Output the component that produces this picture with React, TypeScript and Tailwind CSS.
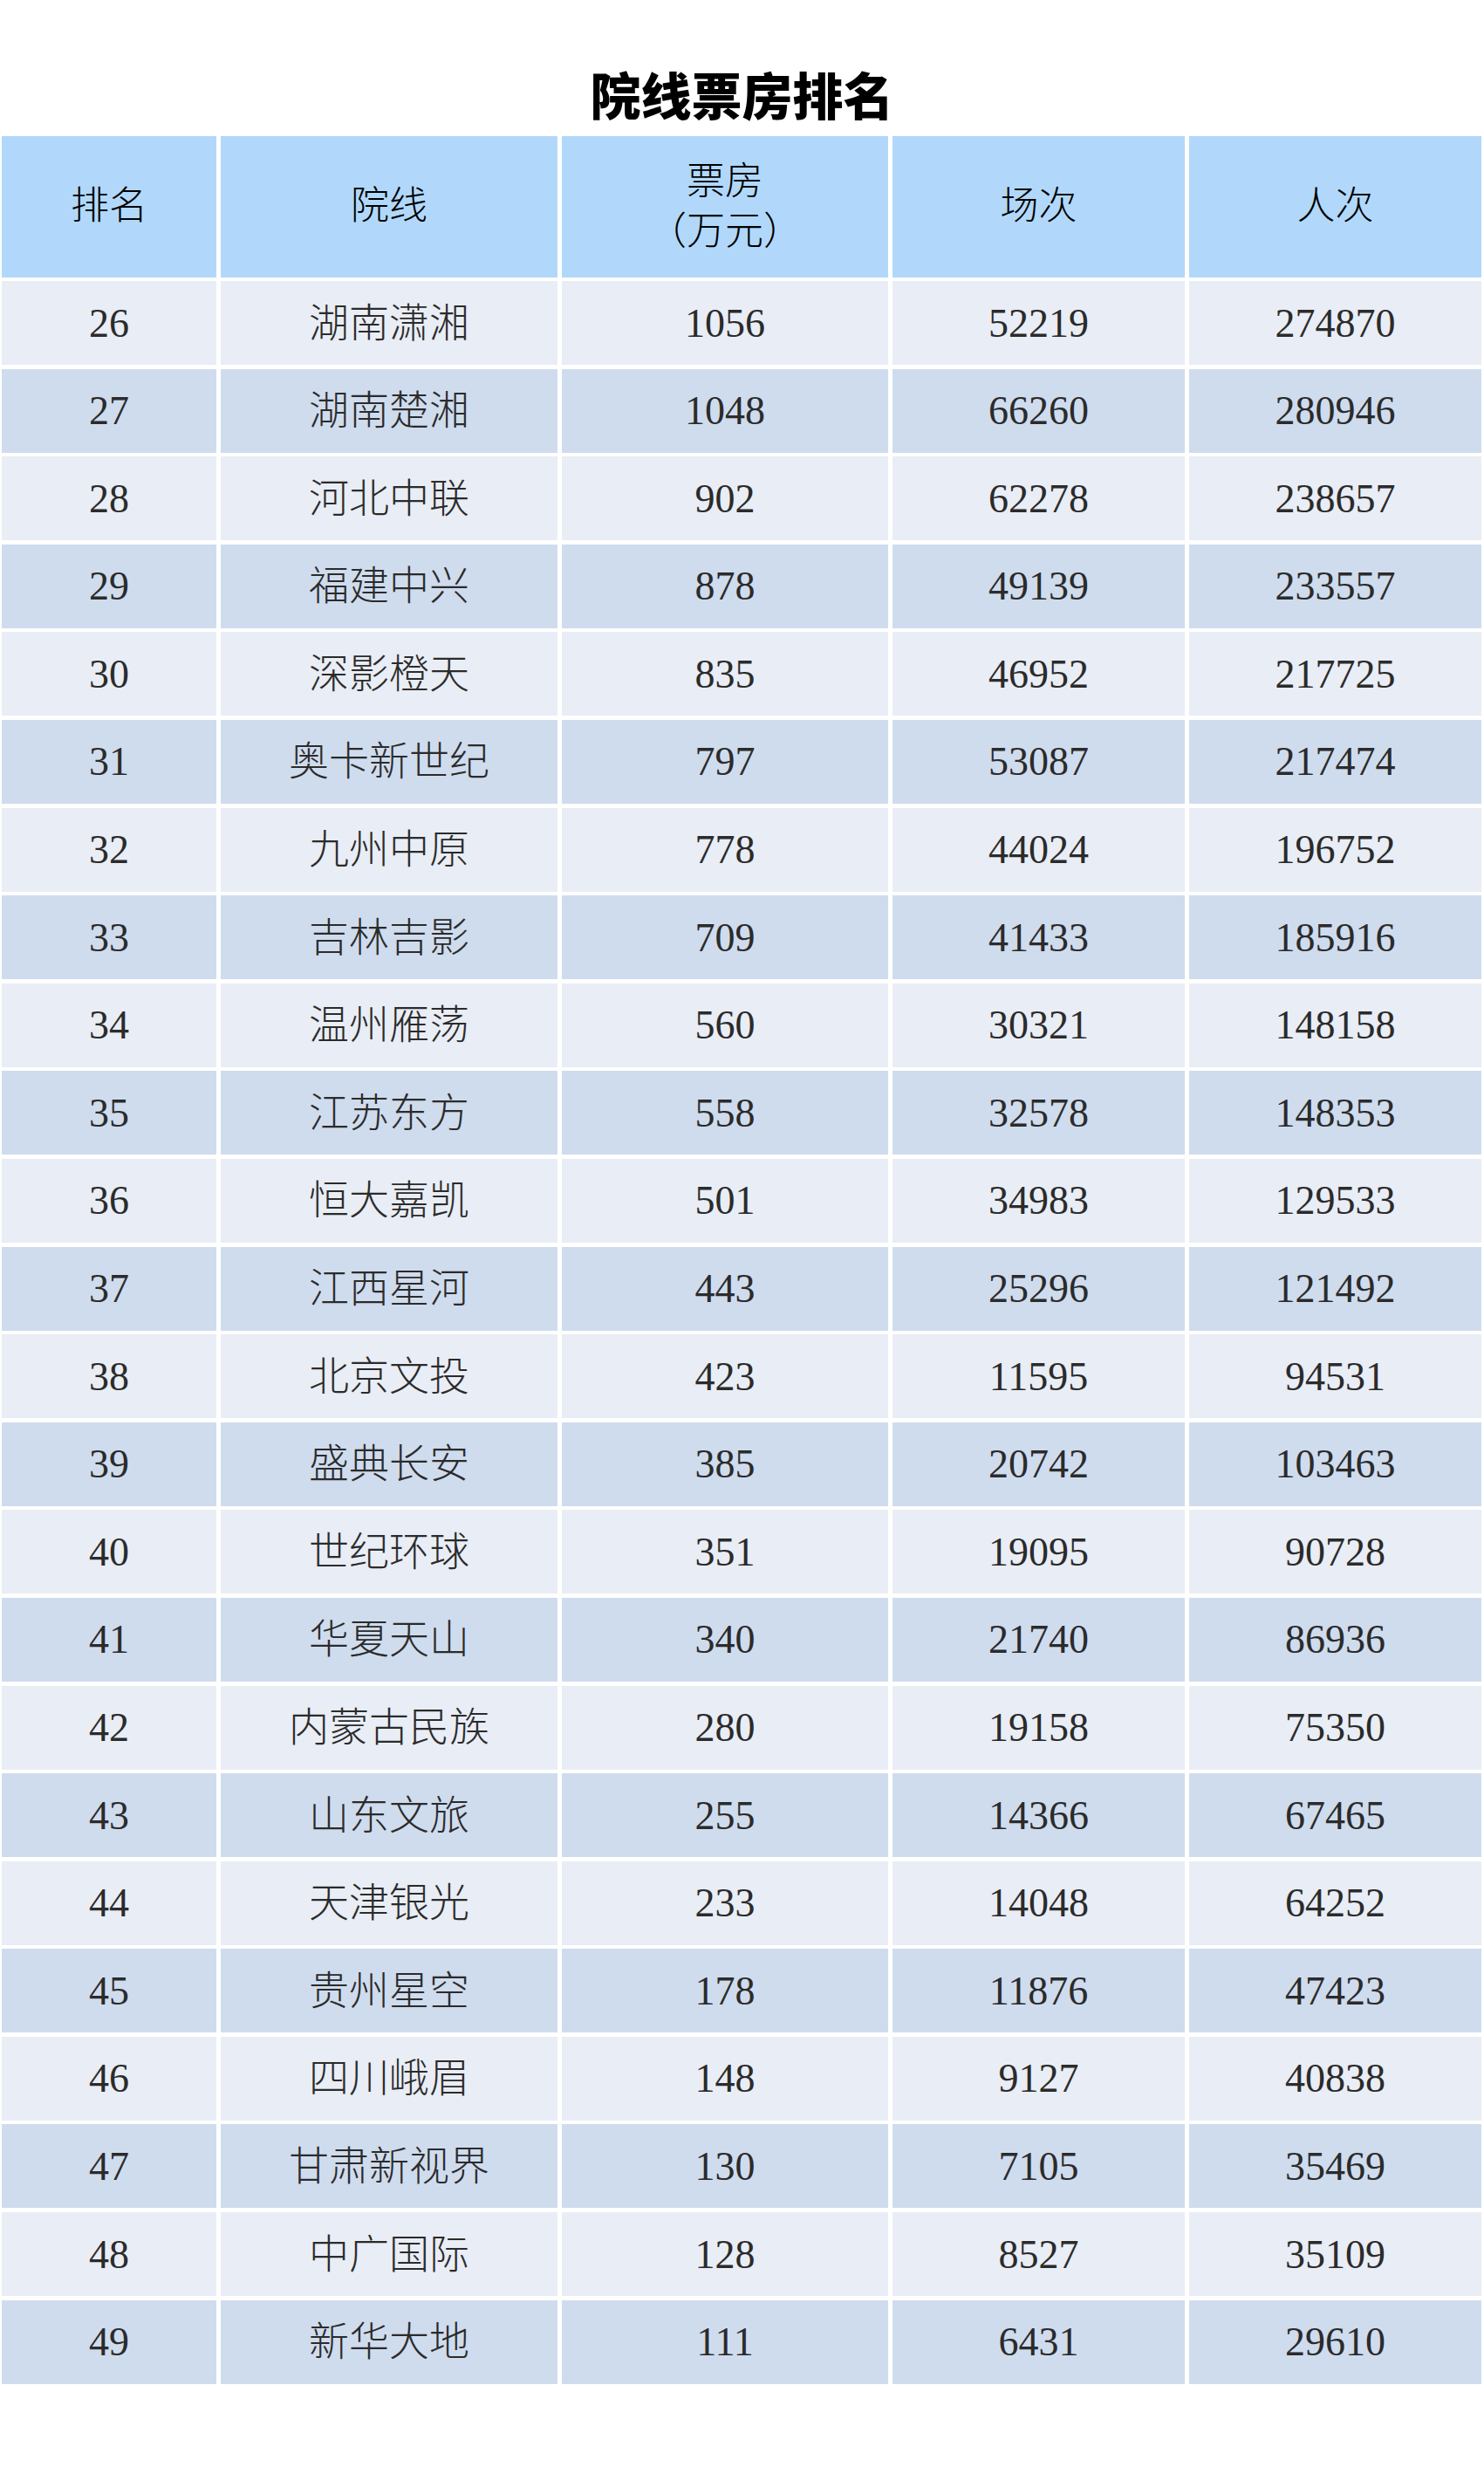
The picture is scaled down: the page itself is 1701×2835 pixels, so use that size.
const rows: [number, string, number, number, number][] = [
  [26, '湖南潇湘', 1056, 52219, 274870],
  [27, '湖南楚湘', 1048, 66260, 280946],
  [28, '河北中联', 902, 62278, 238657],
  [29, '福建中兴', 878, 49139, 233557],
  [30, '深影橙天', 835, 46952, 217725],
  [31, '奥卡新世纪', 797, 53087, 217474],
  [32, '九州中原', 778, 44024, 196752],
  [33, '吉林吉影', 709, 41433, 185916],
  [34, '温州雁荡', 560, 30321, 148158],
  [35, '江苏东方', 558, 32578, 148353],
  [36, '恒大嘉凯', 501, 34983, 129533],
  [37, '江西星河', 443, 25296, 121492],
  [38, '北京文投', 423, 11595, 94531],
  [39, '盛典长安', 385, 20742, 103463],
  [40, '世纪环球', 351, 19095, 90728],
  [41, '华夏天山', 340, 21740, 86936],
  [42, '内蒙古民族', 280, 19158, 75350],
  [43, '山东文旅', 255, 14366, 67465],
  [44, '天津银光', 233, 14048, 64252],
  [45, '贵州星空', 178, 11876, 47423],
  [46, '四川峨眉', 148, 9127, 40838],
  [47, '甘肃新视界', 130, 7105, 35469],
  [48, '中广国际', 128, 8527, 35109],
  [49, '新华大地', 111, 6431, 29610],
];

const cols = 'grid grid-cols-[246px_386px_374px_335px_335px] gap-x-[5px]';
const cell = 'flex items-center justify-center';

function HeaderRow() {
  return (
    <div className={`${cols} h-[162px] text-[44px] text-black font-light`}>
      <div className={`${cell} bg-[#b1d8fa]`}>排名</div>
      <div className={`${cell} bg-[#b1d8fa]`}>院线</div>
      <div className={`${cell} flex-col bg-[#b1d8fa] leading-[57px]`}>
        <span>票房</span>
        <span>（万元）</span>
      </div>
      <div className={`${cell} bg-[#b1d8fa]`}>场次</div>
      <div className={`${cell} bg-[#b1d8fa]`}>人次</div>
    </div>
  );
}

function DataRow({ row, index }: { row: [number, string, number, number, number]; index: number }) {
  const bg = index % 2 === 0 ? 'bg-[#e9edf5]' : 'bg-[#cfdcee]';
  return (
    <div className={`${cols} h-[96px] text-[46px] text-[#2b2b2b] font-light`}>
      {row.map((value, i) => (
        <div key={i} className={`${cell} ${bg}`}>
          {value}
        </div>
      ))}
    </div>
  );
}

export default function App() {
  return (
    <div
      className="w-[1701px] h-[2835px] bg-white"
      style={{ fontFamily: '"Liberation Serif", "Noto Sans CJK SC", serif' }}
    >
      <div
        className="h-[156px] flex items-center justify-center pt-[58px] text-[58px] font-black text-black leading-none"
        style={{ fontFamily: '"Noto Sans CJK SC", sans-serif' }}
      >
        院线票房排名
      </div>
      <div className="ml-[2px] flex flex-col gap-y-[4px]">
        <HeaderRow />
        <div className="flex flex-col gap-y-[4.6px]">
          {rows.map((row, index) => (
            <DataRow key={row[0]} row={row} index={index} />
          ))}
        </div>
      </div>
    </div>
  );
}
